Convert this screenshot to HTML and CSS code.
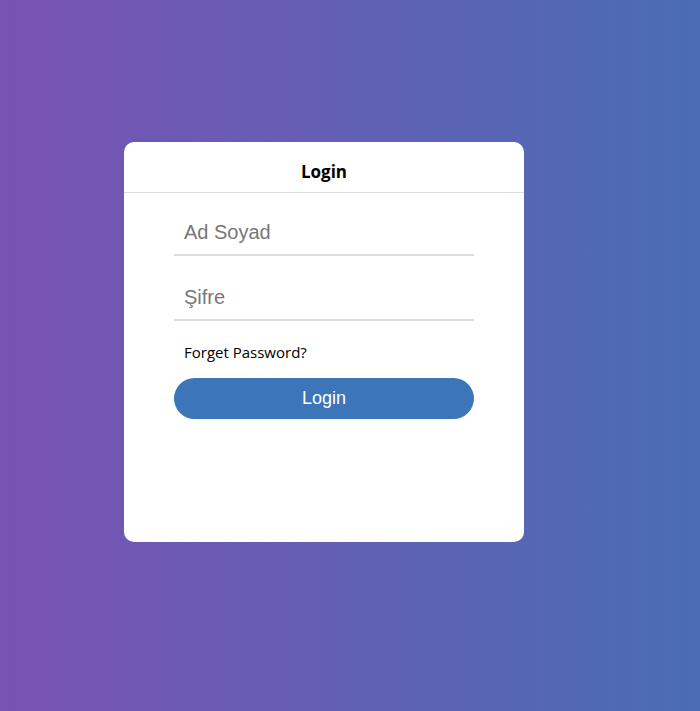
FILE: index.html
```html
<!DOCTYPE html>
<html>
<head>
<meta charset="utf-8">
<link rel="stylesheet" href="styles.css">
</head>
<body>
<div class="page">
  <div class="card">
    <div class="card-header">Login</div>
    <form class="form">
      <input class="field" type="text" placeholder="Ad Soyad">
      <input class="field" type="password" placeholder="Şifre">
      <a class="forgot">Forget Password?</a>
      <button class="btn" type="button">Login</button>
    </form>
  </div>
</div>
</body>
</html>
```
FILE: styles.css
```css
html, body {
  margin: 0;
  padding: 0;
  height: 100%;
}
body {
  background: linear-gradient(to right, #7952b3, #4a6db5);
  font-family: "Open Sans", "Noto Sans", sans-serif;
}
.page {
  min-height: 711px;
  box-sizing: border-box;
  padding: 142px 0 0 124px;
}
.card {
  width: 400px;
  height: 400px;
  background: #fff;
  border-radius: 10px;
  overflow: hidden;
}
.card-header {
  height: 42px;
  border-bottom: 1px solid #dddddd;
  display: flex;
  align-items: center;
  justify-content: center;
  font-weight: bold;
  font-size: 17px;
  color: #000;
  padding-top: 8px;
  box-sizing: content-box;
}
.form {
  display: flex;
  flex-direction: column;
  padding: 21px 50px 0;
}
.field {
  height: 42px;
  box-sizing: border-box;
  border: none;
  border-bottom: 2px solid #dddddd;
  outline: none;
  padding: 0 10px 4px;
  font-family: "Liberation Sans", Arial, sans-serif;
  font-size: 20px;
  color: #333;
  margin-bottom: 23px;
}
.field::placeholder {
  color: #777;
}
.forgot {
  font-size: 15px;
  line-height: 19px;
  color: #000;
  padding-left: 10px;
  margin-top: -1px;
  margin-bottom: 16px;
}
.btn {
  height: 41px;
  border: none;
  border-radius: 21px;
  background: #3c76b8;
  color: #fff;
  font-family: "Liberation Sans", Arial, sans-serif;
  font-size: 18px;
  cursor: pointer;
}
```
